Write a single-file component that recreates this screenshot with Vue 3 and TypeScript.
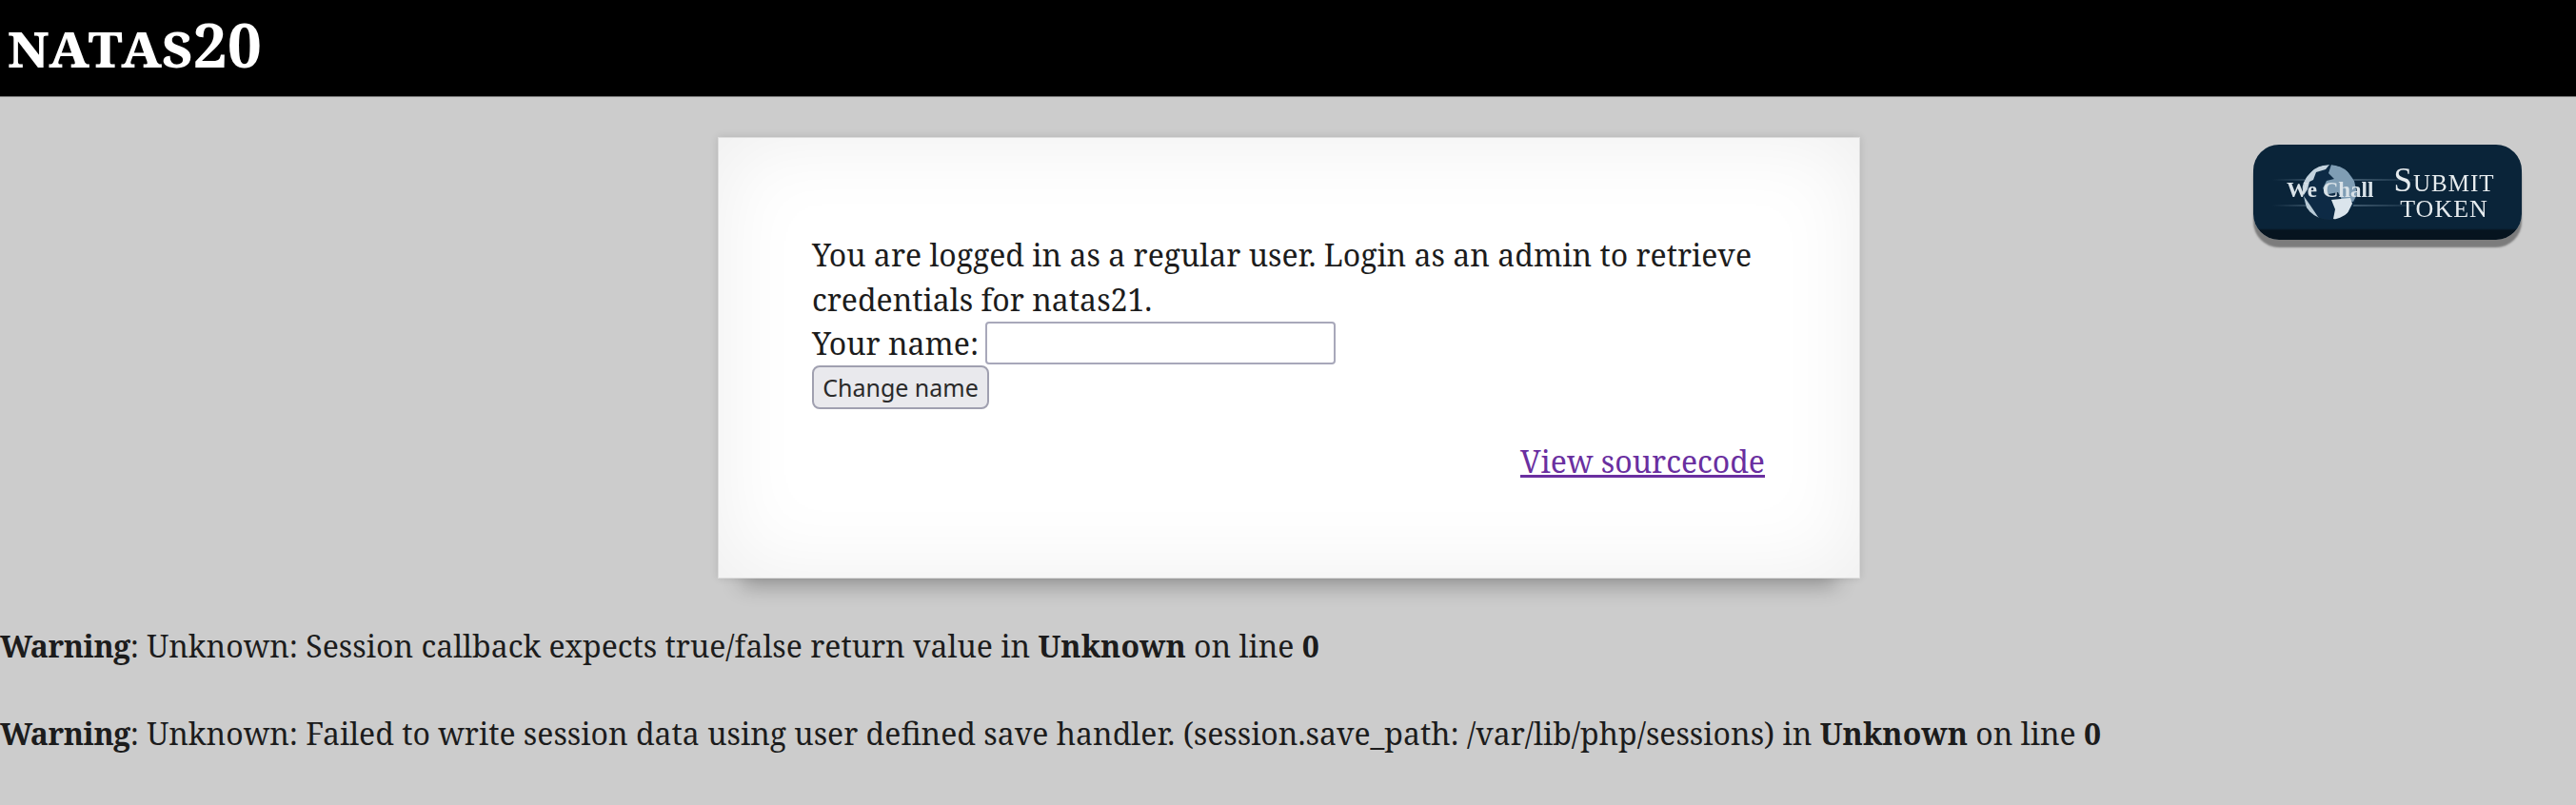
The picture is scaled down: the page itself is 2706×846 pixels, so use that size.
<template>
  <header class="site-header">
    <h1>natas20</h1>
  </header>

  <main class="page">
    <a class="token-button" href="#">
      <svg class="globe" viewBox="0 0 160 80" width="160" height="80" aria-hidden="true">
        <defs>
          <linearGradient id="streak" x1="0" x2="1" y1="0" y2="0">
            <stop offset="0" stop-color="#8fa9bd" stop-opacity="0" />
            <stop offset="0.4" stop-color="#8fa9bd" stop-opacity="0.5" />
            <stop offset="1" stop-color="#8fa9bd" stop-opacity="0" />
          </linearGradient>
          <clipPath id="globe-clip"><circle cx="60" cy="40" r="29" /></clipPath>
          <filter id="soft"><feGaussianBlur stdDeviation="0.7" /></filter>
        </defs>
        <rect x="0" y="26" width="160" height="2" fill="url(#streak)" />
        <rect x="0" y="53" width="160" height="2" fill="url(#streak)" />
        <g clip-path="url(#globe-clip)" filter="url(#soft)">
          <circle cx="60" cy="40" r="29" fill="#0e2c44" />
          <path d="M62 11l14 3 10 14 3 14-4 8-12-2-4-8-10 2-6-6 4-8 8-2-6-6z" fill="#7f9db4" />
          <path d="M36 24l10-11 14-2-4 5-10 3-3 8-4 2-2 8-4 6-2-10z" fill="#c4d3de" />
          <path d="M33 44l7 10 8 12 4 5-7-2-9-12z" fill="#b8cad6" />
          <path d="M62 48l20-2 2 6-6 12-8 6-6-2 2-10z" fill="#dbe5ec" />
        </g>
      </svg>
      <span class="we-chall">We Chall</span>
      <span class="token-label">
        <span class="submit">Submit</span>
        <span class="token">TOKEN</span>
      </span>
    </a>

    <section class="card">
      <div class="intro">You are logged in as a regular user. Login as an admin to retrieve credentials for natas21.</div>
      <form class="name-form" @submit.prevent>
        <label>Your name: <input v-model="name" type="text" /></label>
        <button type="submit">Change name</button>
      </form>
      <div class="source-link"><a href="#">View sourcecode</a></div>
    </section>

    <p v-for="w in warnings" :key="w.text" class="warning">
      <b>Warning</b>: {{ w.text }} in <b>Unknown</b> on line <b>0</b>
    </p>
  </main>
</template>

<script setup lang="ts">
import { ref } from 'vue';

const name = ref('');

const warnings = [
  { text: 'Unknown: Session callback expects true/false return value' },
  { text: 'Unknown: Failed to write session data using user defined save handler. (session.save_path: /var/lib/php/sessions)' }
];
</script>

<style>
body {
  margin: 0;
  background: #ccc;
}
</style>

<style scoped>
.site-header {
  height: 101px;
  background: #000;
  border-bottom: 1px solid #777;
}
h1 {
  margin: 0;
  padding: 9px 0 0 8px;
  color: #fff;
  font: bold 64px/76px "Noto Serif", "DejaVu Serif Condensed", "DejaVu Serif", serif;
  font-variant: small-caps;
}
.page {
  position: relative;
  isolation: isolate;
  padding-top: 42px;
  font: 32px/46.5px "Noto Serif", "DejaVu Serif Condensed", "DejaVu Serif", serif;
  color: #1c1c1c;
}
.card {
  box-sizing: border-box;
  position: relative;
  width: 1200px;
  height: 464px;
  margin-left: 754px;
  padding: 100px 99px 0 98px;
  background: #fff;
  border: 1px solid #ddd;
  box-shadow: 0 0 8px rgba(0, 0, 0, 0.12), inset 0 0 90px rgba(0, 0, 0, 0.07);
}
.card::after {
  content: "";
  position: absolute;
  z-index: -1;
  left: 24px;
  right: 24px;
  bottom: 4px;
  height: 20px;
  box-shadow: 0 12px 22px rgba(0, 0, 0, 0.3);
}
.name-form label {
  display: block;
  height: 46px;
}
.name-form input {
  box-sizing: border-box;
  width: 368px;
  height: 45px;
  margin: -10px 0 -10px -1px;
  padding: 0 4px;
  vertical-align: 8px;
  border: 2px solid #a8a8ba;
  border-radius: 4px;
  background: #fff;
}
.name-form button {
  display: block;
  box-sizing: border-box;
  width: 186px;
  height: 46px;
  padding: 0;
  font: 25px "Noto Sans", sans-serif;
  color: #2a2a2a;
  background: #e9e9ed;
  border: 2px solid #a0a0b0;
  border-radius: 8px;
}
.source-link {
  margin-top: 32px;
  text-align: right;
}
.source-link a {
  color: #6a2fa0;
}
.warning {
  margin: 46px 0 0;
  line-height: 46px;
  white-space: nowrap;
}
.warning b:first-child {
  letter-spacing: -0.45px;
}
.card + .warning {
  margin-top: 48px;
}
.token-button {
  position: absolute;
  top: 50px;
  left: 2367px;
  width: 282px;
  height: 100px;
  border-radius: 27px;
  background: linear-gradient(#0a2439 0 88px, #06141f 90px);
  box-shadow: 0 8px 2px #7c7c7c;
  text-decoration: none;
  overflow: hidden;
}
.globe {
  position: absolute;
  left: 20px;
  top: 10px;
}
.we-chall {
  position: absolute;
  left: 35px;
  top: 36px;
  font: bold 23px/24px "Liberation Serif", serif;
  color: #d9e2e8;
  white-space: nowrap;
  filter: blur(0.5px);
}
.token-label {
  position: absolute;
  left: 146px;
  top: 21px;
  width: 109px;
  text-align: center;
  font-family: "Liberation Serif", serif;
  color: #e6ebee;
  filter: blur(0.4px);
}
.submit {
  display: block;
  font-size: 35px;
  line-height: 34px;
  letter-spacing: 1px;
  font-variant: small-caps;
  white-space: nowrap;
}
.token {
  display: block;
  font-size: 26px;
  line-height: 26px;
  letter-spacing: 1px;
}
</style>
